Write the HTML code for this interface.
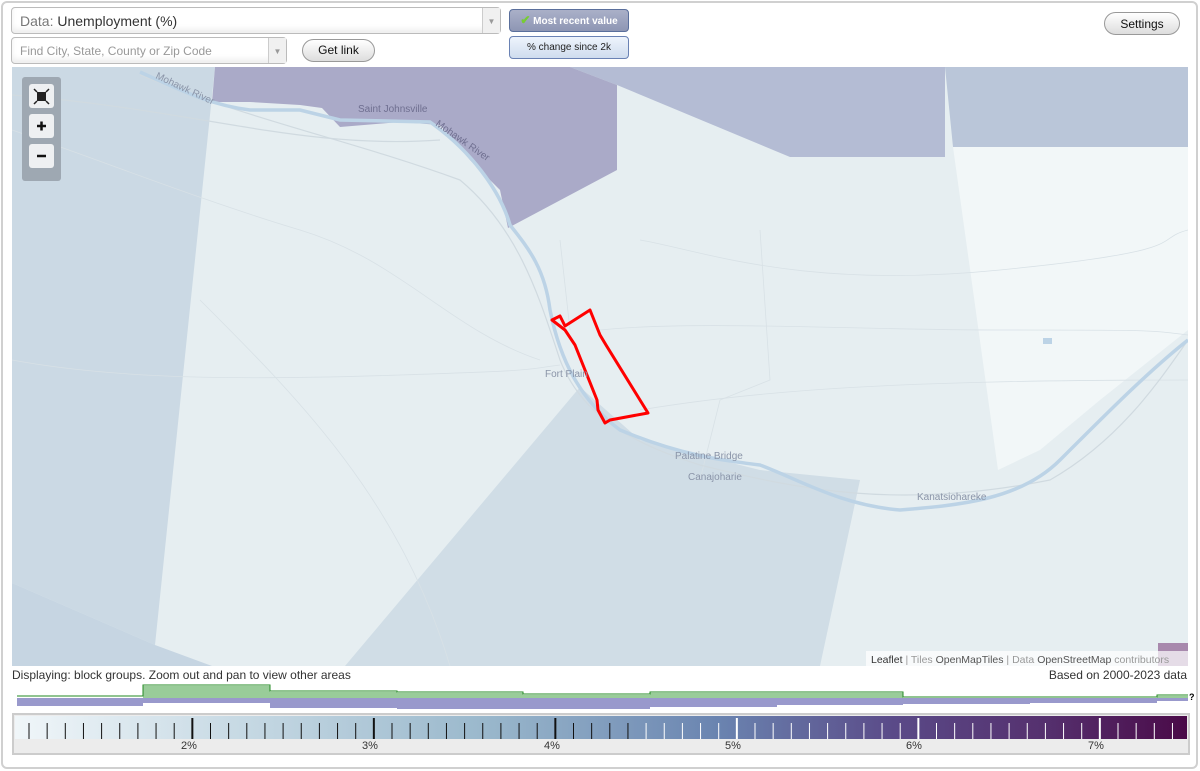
<!DOCTYPE html>
<html><head><meta charset="utf-8"><style>
*{margin:0;padding:0;box-sizing:border-box}
body{width:1200px;height:771px;background:#fff;font-family:"Liberation Sans",Arial,sans-serif;position:relative;overflow:hidden}
.frame{position:absolute;left:1px;top:1px;width:1197px;height:768px;border:2px solid #d0d0d0;border-radius:6px}
.sel{position:absolute;background:#fff;border:1px solid #bbb;border-radius:4px;box-shadow:inset 0 -4px 6px #eee}
.sel .arr{position:absolute;right:0;top:0;bottom:0;width:18px;border-left:1px solid #ccc;background:#f0f0f0;color:#999;font-size:8px;text-align:center}
.btn{position:absolute;border:1px solid #999;border-radius:12px;background:linear-gradient(#fff,#ddd);font-size:12px;text-align:center;color:#111}
.tog{position:absolute;border:1px solid #6a82b4;border-radius:4px;font-size:10px;text-align:center}
.lbl{position:absolute;font-size:12px;color:#333}
</style></head><body>
<div class="frame"></div>
<div class="sel" style="left:11px;top:7px;width:490px;height:27px"><span style="position:absolute;left:8px;top:5px;font-size:14px;color:#777">Data: <span style="color:#333">Unemployment (%)</span></span><div class="arr" style="line-height:27px">▼</div></div>
<div class="sel" style="left:11px;top:37px;width:276px;height:27px"><span style="position:absolute;left:8px;top:6px;font-size:12px;color:#999">Find City, State, County or Zip Code</span><div class="arr" style="line-height:27px">▼</div></div>
<div class="btn" style="left:302px;top:39px;width:73px;height:23px;line-height:21px">Get link</div>
<div class="tog" style="left:509px;top:9px;width:120px;height:23px;background:linear-gradient(#aab0c8,#8e96b4);color:#fff;font-weight:bold;line-height:21px;border-color:#5a6f9c"><span style="color:#7c3;font-size:12px">✔</span> Most recent value</div>
<div class="tog" style="left:509px;top:36px;width:120px;height:23px;background:linear-gradient(#eef4fc,#cfdcee);color:#222;line-height:21px">% change since 2k</div>
<div class="btn" style="left:1104px;top:12px;width:76px;height:23px;line-height:22px">Settings</div>

<svg style="position:absolute;left:12px;top:67px" width="1176" height="599" viewBox="12 67 1176 599">
<rect x="12" y="67" width="1176" height="599" fill="#e6eef1"/>
<polygon points="12,67 215,67 155,645 12,583" fill="#cbd9e4"/>
<polygon points="12,583 155,645 212,666 12,666" fill="#c6d5e2"/>
<polygon points="953,147 1188,147 1188,330 1100,400 1040,450 998,470" fill="#f2f7f8"/>
<polygon points="570,67 945,67 945,157 790,157 617,85" fill="#b4bcd4"/>
<polygon points="945,67 1188,67 1188,147 953,147" fill="#bac6d9"/>
<polygon points="215,67 570,67 617,85 617,170 508,228 500,190 470,160 440,125 400,122 340,127 322,108 300,105 250,102 212,102" fill="#aaaac8"/>
<polygon points="345,666 580,387 640,440 760,470 860,480 820,666" fill="#d0dde6"/>
<g fill="none" stroke="#d8e1e6" stroke-width="0.8">
<path d="M12,130 C100,160 200,200 300,230 S450,330 540,360"/>
<path d="M12,360 C120,380 250,380 400,375 S520,370 560,365"/>
<path d="M640,240 C700,250 800,290 1000,270 S1150,240 1188,230"/>
<path d="M600,330 C700,320 850,330 1000,330 S1150,330 1188,335"/>
<path d="M760,230 L770,380 L720,400 L700,480"/>
<path d="M640,410 C760,390 900,380 1188,380"/>
<path d="M200,300 C300,400 400,500 450,666"/>
<path d="M560,240 L570,330"/>
</g>
<g fill="none" stroke="#d0dae0" stroke-width="1.2">
<path d="M140,75 C250,120 350,140 460,180 C520,230 540,300 560,360 C580,410 620,440 700,465 C800,490 900,510 1050,480 C1120,440 1160,380 1188,340"/>
<path d="M12,95 C200,110 300,150 440,140"/>
</g>
<path d="M140,72 C180,90 210,105 250,110 L300,110 L340,120 L430,122 C470,150 500,190 510,225 C530,250 545,270 550,310 C560,360 580,400 620,430 C680,455 720,460 760,465 C800,480 840,505 900,510 C960,505 1020,500 1060,460 C1110,410 1150,370 1188,340" fill="none" stroke="#bcd3e6" stroke-width="3.5"/>
<rect x="1043" y="338" width="9" height="6" fill="#bcd3e6"/>
<polygon points="1158,643 1188,643 1188,666 1158,666" fill="#a889ad"/>
<polygon points="552,320 560,316 565,326 590,310 600,335 606,345 648,413 610,420 605,423 598,410 597,400 575,345 565,330" fill="none" stroke="#f00" stroke-width="3" stroke-linejoin="round"/>
<g font-family="Liberation Sans,sans-serif" font-size="10" fill="#8a94a8">
<text x="358" y="112" fill="#6f6f90">Saint Johnsville</text>
<text x="545" y="377">Fort Plain</text>
<text x="675" y="459">Palatine Bridge</text>
<text x="688" y="480">Canajoharie</text>
<text x="917" y="500">Kanatsiohareke</text>
<text x="155" y="78" transform="rotate(25 155 78)">Mohawk River</text>
<text x="435" y="125" transform="rotate(35 435 125)" fill="#6f6f90">Mohawk River</text>
</g>
<rect x="866" y="651" width="322" height="15" fill="rgba(255,255,255,0.7)"/>
<text x="871" y="663" font-size="10.5" fill="#999" font-family="Liberation Sans,sans-serif"><tspan fill="#333">Leaflet</tspan> | Tiles <tspan fill="#555">OpenMapTiles</tspan> | Data <tspan fill="#555">OpenStreetMap</tspan> contributors</text>
<rect x="22" y="77" width="39" height="104" rx="3" fill="#9ea8b2"/>
<rect x="29" y="84" width="25" height="24" rx="3" fill="#eef0f2"/>
<rect x="29" y="114" width="25" height="24" rx="3" fill="#eef0f2"/>
<rect x="29" y="144" width="25" height="24" rx="3" fill="#eef0f2"/>
<rect x="37" y="92" width="9" height="9" fill="#222"/>
<path d="M34,89 l3,3 M49,89 l-3,3 M34,104 l3,-3 M49,104 l-3,-3" stroke="#222" stroke-width="1.5"/>
<path d="M37,126 h9 M41.5,121.5 v9" stroke="#111" stroke-width="2.5"/>
<path d="M37,156 h9" stroke="#111" stroke-width="2.5"/>
</svg>

<div class="lbl" style="left:12px;top:668px">Displaying: block groups. Zoom out and pan to view other areas</div>
<div class="lbl" style="right:13px;top:668px">Based on 2000-2023 data</div>

<svg style="position:absolute;left:0;top:680px" width="1200" height="35">
<g fill="#99cc99" stroke="#228822" stroke-width="1">
<path d="M17,18 H143 V6 H270 V12 H397 V13 H523 V15 H650 V13 H903 V18 H1157 V16 H1188 V18 H17Z" stroke="none"/>
<path d="M17,16 H143 V5 H270 V11 H397 V12 H523 V14 H650 V12 H777 V12 H903 V17 H1157 V15 H1188" fill="none"/>
</g>
<path d="M17,18 H1188 V21 H1157 V23 H1030 V24 H903 V25 H777 V27 H650 V29 H397 V28 H270 V23 H143 V26 H17Z" fill="#9999cc"/>
<text x="1189" y="20" font-size="9" font-weight="bold">?</text>
</svg>

<div style="position:absolute;left:12px;top:713px;width:1178px;height:42px;border:2px solid #ccc;background:#ececec">
<div style="position:absolute;left:1px;top:1px;right:1px;height:23px;background:linear-gradient(90deg,#f0f6f9,#c5d8e3 20%,#9ab8cc 40%,#6a84b0 60%,#5a4a88 75%,#55306e 88%,#4a0a48)"></div>
<svg style="position:absolute;left:0;top:0" width="1176" height="40" id="t"></svg>
</div>
<div id="lab" style="position:absolute;left:0;top:740px;font-size:11px;color:#333"></div>
<script>
var s=document.getElementById('t'),h='',l='';
for(var i=0;i<64;i++){var x=15+i*18.15;if(x>1172)break;var m=(i+1)%10==0;var ax=x+12;
var c=ax<640?'#111':'#fff';h+='<line x1="'+x+'" x2="'+x+'" y1="'+(m?3:8)+'" y2="24" stroke="'+c+'" stroke-width="'+(m?2:1)+'"/>';}
s.innerHTML=h;
var labs=[[190,'2%'],[371,'3%'],[553,'4%'],[734,'5%'],[915,'6%'],[1097,'7%']];
labs.forEach(function(a){l+='<span style="position:absolute;left:'+(a[0]-9)+'px">'+a[1]+'</span>'});
document.getElementById('lab').innerHTML=l;
</script>
</body></html>
